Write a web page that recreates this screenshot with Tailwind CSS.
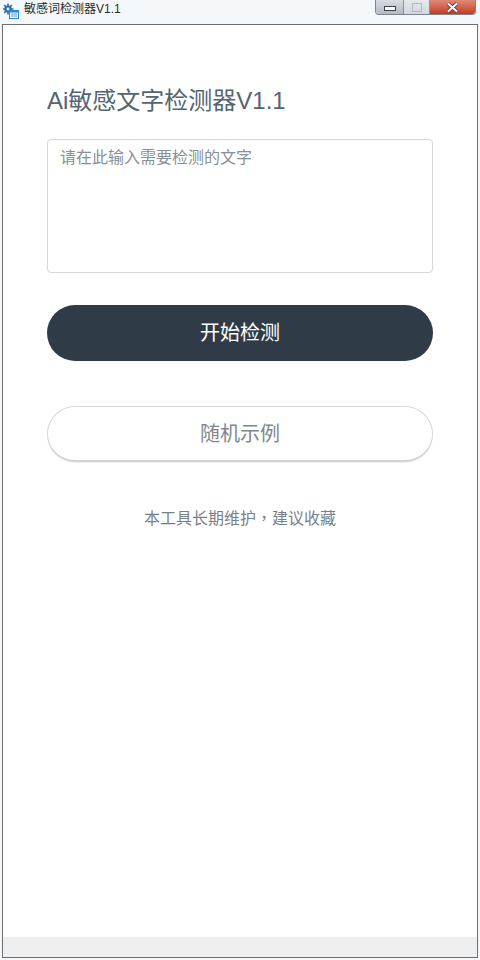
<!DOCTYPE html>
<html lang="zh-CN">
<head>
  <meta charset="UTF-8">
  <title>敏感词检测器V1.1</title>
  <script src="https://cdn.jsdelivr.net/npm/@tailwindcss/browser@4"></script>
</head>
<body class="w-[480px] h-[960px] overflow-hidden bg-[#f5f8fb] font-['Liberation_Sans','Noto_Sans_CJK_SC',sans-serif]">
  <!-- Title bar -->
  <div class="relative flex items-start h-6 pl-[3px] pt-[2px]">
    <svg class="w-4 h-[17px] mt-[1px]" viewBox="0 0 16 17">
      <circle cx="5" cy="6" r="3.6" fill="#1f5590"/>
      <path d="M5 0.5v11M-0.5 6h11M1.2 2.2l7.6 7.6M8.8 2.2l-7.6 7.6" stroke="#2f6fb5" stroke-width="1.7"/>
      <circle cx="5" cy="6" r="1.4" fill="#e6f0fa"/>
      <rect x="6" y="7" width="10" height="9" fill="#2a8ad6"/>
      <rect x="7" y="9.5" width="8" height="5.5" fill="#eaf5fd"/>
      <path d="M8 11h6M8 13h6" stroke="#5aa5de" stroke-width="1"/>
    </svg>
    <span class="ml-[5px] text-xs leading-[15px] text-[#2a2a2a]">敏感词检测器V1.1</span>
    <!-- Window buttons -->
    <div class="absolute top-0 left-[375px] flex h-[15px] rounded-b-[4px] border border-t-0 border-[#7d848c] overflow-hidden">
      <div class="w-[28px] flex items-end justify-center pb-[3px] bg-gradient-to-b from-[#d9dde2] to-[#b4bac2] border-r border-[#8b929a]">
        <div class="w-[12px] h-[5px] border border-[#3c4148] bg-white"></div>
      </div>
      <div class="w-[26px] flex items-center justify-center bg-gradient-to-b from-[#e6e9ec] to-[#d3d7dc] border-r border-[#8b929a]">
        <div class="w-[10px] h-[9px] border border-[#b4b9bf]"></div>
      </div>
      <div class="w-[45px] flex items-center justify-center bg-gradient-to-b from-[#e08a78] to-[#c2381f]">
        <svg class="w-[13px] h-[11px]" viewBox="0 0 13 11"><path d="M2 1.5l9 8M11 1.5l-9 8" stroke="#3d3030" stroke-width="3.6"/><path d="M2 1.5l9 8M11 1.5l-9 8" stroke="#fff" stroke-width="2.2"/></svg>
      </div>
    </div>
  </div>

  <!-- Client area -->
  <div class="ml-[2px] w-[476px] h-[934px] flex flex-col border border-[#6f6f6f] bg-white">
    <div class="flex-1 flex flex-col pl-[44px]">
      <h1 class="mt-[60px] text-2xl leading-[32px] font-normal text-[#56646f]">Ai敏感文字检测器V1.1</h1>
      <textarea placeholder="请在此输入需要检测的文字" class="mt-[22px] h-[134px] w-[386px] resize-none rounded-[4px] border border-[#d5d8dc] px-[12px] py-[6px] text-base leading-[24px] placeholder:text-[#898f94] outline-none"></textarea>
      <button class="mt-[32px] h-14 w-[386px] rounded-full bg-[#2f3c48] text-xl text-white">开始检测</button>
      <button class="mt-[45px] h-14 w-[386px] rounded-full border border-[#d5d8db] border-b-2 border-b-[#d2d5d8] bg-white text-xl text-[#7f878d] shadow-[0_1px_0_#eceef0]">随机示例</button>
      <p class="mt-[43px] w-[386px] text-center text-base leading-[24px] text-[#778188]">本工具长期维护<span lang="zh-TW" class="font-['Noto_Sans_CJK_TC',sans-serif]">，</span>建议收藏</p>
    </div>
    <div class="h-5 bg-[#efefef]"></div>
  </div>
</body>
</html>
